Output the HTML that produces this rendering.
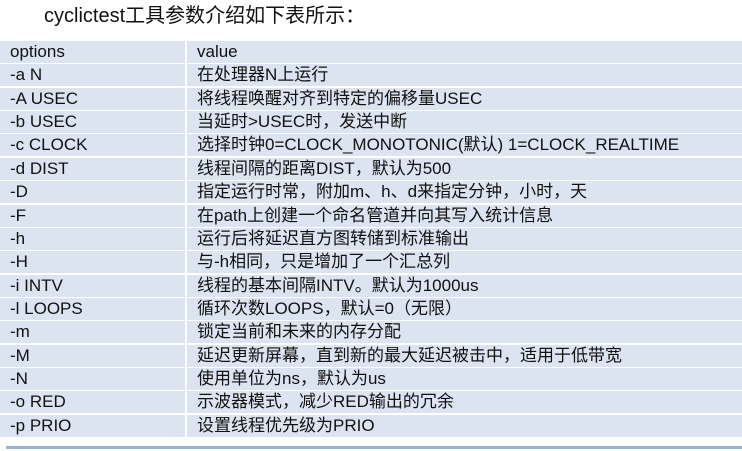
<!DOCTYPE html>
<html><head><meta charset="utf-8"><style>
body{margin:0;width:742px;height:451px;background:#fff;overflow:hidden;font-family:"Liberation Sans","Noto Sans CJK SC",sans-serif;position:relative}
.t{position:absolute;left:44px;top:3px;font-size:20px;color:#111;line-height:26px}
.r{position:absolute;left:0;width:742px;height:22px}
.r div{position:absolute;top:0;height:22px;background:#dbe4f0;font-size:17px;color:#111;line-height:22px;white-space:nowrap;padding-left:10px;box-sizing:border-box}
.a{left:0;width:185px}
.b{left:187px;width:555px}
.line{position:absolute;left:6px;top:446px;width:736px;height:3px;background:#98b3d6}
</style></head><body>
<div class="t">cyclictest工具参数介绍如下表所示：</div>
<div class="r" style="top:41px"><div class="a">options</div><div class="b">value</div></div>
<div class="r" style="top:64.4px"><div class="a">-a N</div><div class="b">在处理器N上运行</div></div>
<div class="r" style="top:87.7px"><div class="a">-A USEC</div><div class="b">将线程唤醒对齐到特定的偏移量USEC</div></div>
<div class="r" style="top:111.1px"><div class="a">-b USEC</div><div class="b">当延时&gt;USEC时，发送中断</div></div>
<div class="r" style="top:134.4px"><div class="a">-c CLOCK</div><div class="b">选择时钟0=CLOCK_MONOTONIC(默认) 1=CLOCK_REALTIME</div></div>
<div class="r" style="top:157.8px"><div class="a">-d DIST</div><div class="b">线程间隔的距离DIST，默认为500</div></div>
<div class="r" style="top:181.1px"><div class="a">-D</div><div class="b">指定运行时常，附加m、h、d来指定分钟，小时，天</div></div>
<div class="r" style="top:204.5px"><div class="a">-F</div><div class="b">在path上创建一个命名管道并向其写入统计信息</div></div>
<div class="r" style="top:227.8px"><div class="a">-h</div><div class="b">运行后将延迟直方图转储到标准输出</div></div>
<div class="r" style="top:251.2px"><div class="a">-H</div><div class="b">与-h相同，只是增加了一个汇总列</div></div>
<div class="r" style="top:274.5px"><div class="a">-i INTV</div><div class="b">线程的基本间隔INTV。默认为1000us</div></div>
<div class="r" style="top:297.9px"><div class="a">-l LOOPS</div><div class="b">循环次数LOOPS，默认=0（无限）</div></div>
<div class="r" style="top:321.2px"><div class="a">-m</div><div class="b">锁定当前和未来的内存分配</div></div>
<div class="r" style="top:344.6px"><div class="a">-M</div><div class="b">延迟更新屏幕，直到新的最大延迟被击中，适用于低带宽</div></div>
<div class="r" style="top:367.9px"><div class="a">-N</div><div class="b">使用单位为ns，默认为us</div></div>
<div class="r" style="top:391.3px"><div class="a">-o RED</div><div class="b">示波器模式，减少RED输出的冗余</div></div>
<div class="r" style="top:414.6px"><div class="a">-p PRIO</div><div class="b">设置线程优先级为PRIO</div></div>
<div class="line"></div>
</body></html>
